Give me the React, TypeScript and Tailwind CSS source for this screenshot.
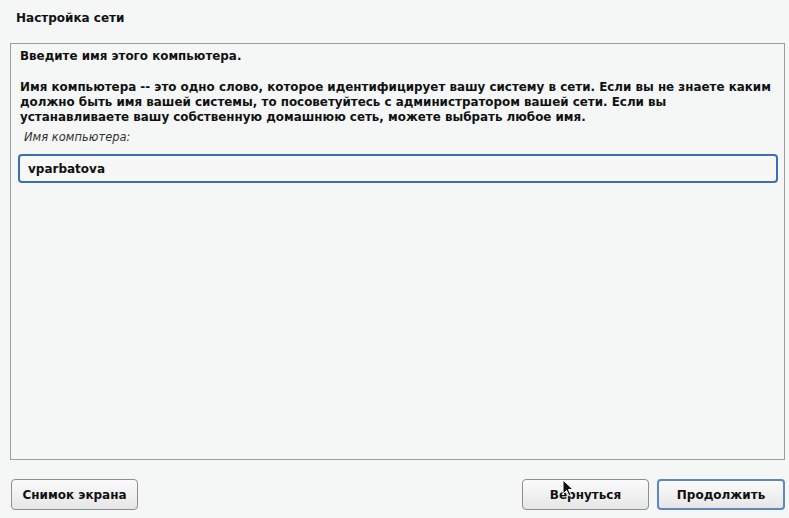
import React from "react";

export default function App() {
  const font = { fontFamily: '"DejaVu Sans", "Noto Sans", sans-serif' };
  return (
    <div
      className="relative w-[789px] h-[518px] bg-[#f4f7f6] flex flex-col text-[#111] overflow-hidden"
      style={font}
    >
      <div className="pt-[11px] pl-[16px] h-[43px] text-[12px] leading-[15px] font-bold">
        Настройка сети
      </div>
      <div className="ml-[10px] mr-[4px] h-[417px] border border-[#9b9d9c] pl-[9px] pr-[6px] pt-[5px] flex flex-col">
        <div className="text-[11.9px] leading-[15px] font-bold whitespace-nowrap">Введите имя этого компьютера.</div>
        <div className="mt-[16px] text-[11.9px] leading-[15px] font-bold whitespace-nowrap">
          Имя компьютера -- это одно слово, которое идентифицирует вашу систему в сети. Если вы не знаете каким
          <br />
          должно быть имя вашей системы, то посоветуйтесь с администратором вашей сети. Если вы
          <br />
          устанавливаете вашу собственную домашнюю сеть, можете выбрать любое имя.
        </div>
        <div className="mt-[5px] pl-[4px] text-[11.5px] leading-[15px] italic text-[#333]">Имя компьютера:</div>
        <div className="mt-[9px] h-[29px] ml-[-2px] w-[760px] rounded-[4px] border-2 border-[#3f6db3] bg-[#f7f7f7] flex items-center pl-[8px] text-[12px] font-bold">
          vparbatova
        </div>
      </div>
      <div className="flex items-start pt-[19px] pl-[11px] pr-[4px]">
        <button className="w-[127px] h-[31px] rounded-[4px] border border-[#8e8e8e] bg-gradient-to-b from-[#fbfbfb] to-[#e6e6e6] text-[12px] font-bold text-[#111]">
          Снимок экрана
        </button>
        <div className="flex-1" />
        <button className="w-[127px] h-[31px] rounded-[4px] border border-[#8e8e8e] bg-gradient-to-b from-[#fbfbfb] to-[#e6e6e6] text-[12px] font-bold text-[#111]">
          Вернуться
        </button>
        <button className="ml-[8px] w-[128px] h-[31px] rounded-[4px] border-2 border-[#5f85c2] bg-gradient-to-b from-[#fbfbfb] to-[#e6e6e6] text-[12px] font-bold text-[#111]">
          Продолжить
        </button>
      </div>
      <svg
        className="absolute left-[562px] top-[479px]"
        width="12"
        height="19"
        viewBox="0 0 12 19"
      >
        <path d="M1 1 L1 15 L4.5 11.5 L7 17 L9 16 L6.5 10.5 L11 10.5 Z" fill="#111" stroke="#fff" strokeWidth="1" />
      </svg>
    </div>
  );
}
